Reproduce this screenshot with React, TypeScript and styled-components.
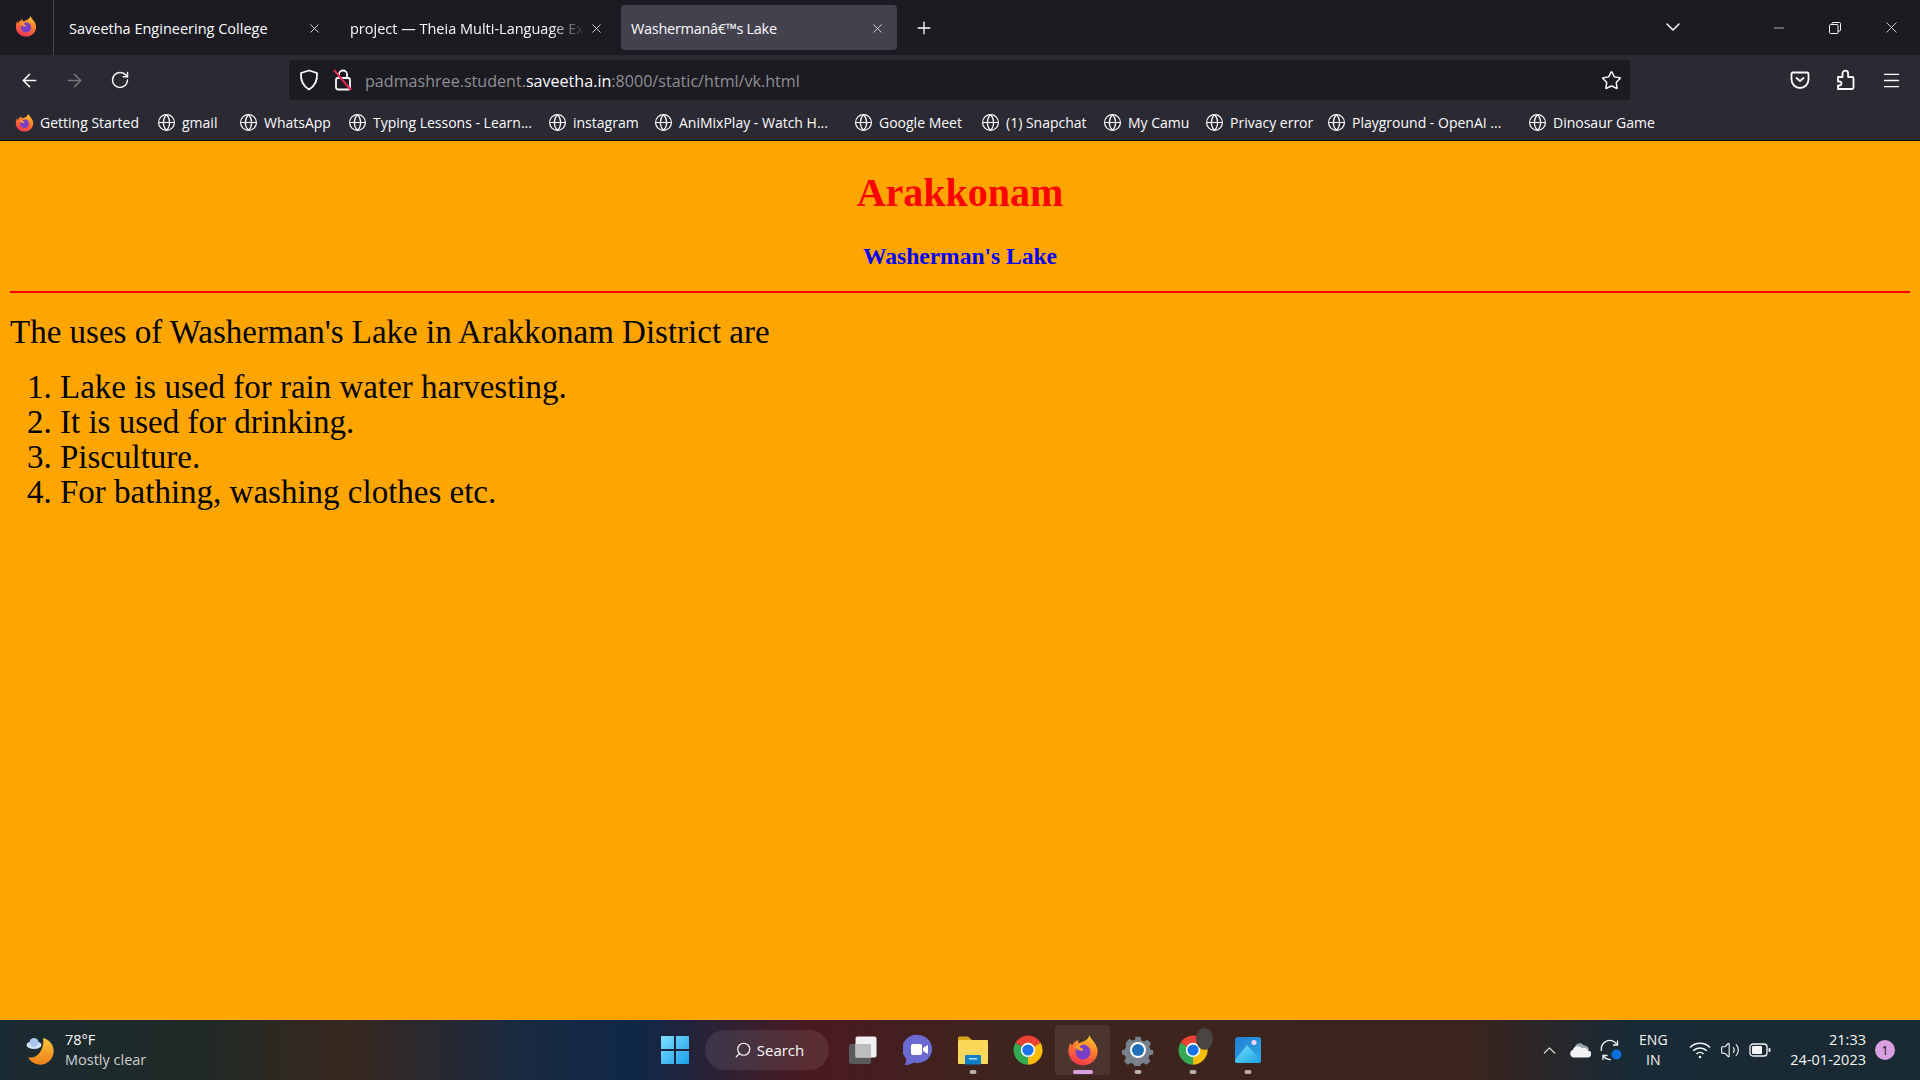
import { Globe, X, Plus, ChevronDown, ChevronUp, Minus, ArrowLeft, ArrowRight, RotateCw, Star, Menu, Search, Volume2 } from "lucide-react";
import styled, { createGlobalStyle } from "styled-components";

const GlobalStyle = createGlobalStyle`
    html, body { margin: 0; padding: 0; height: 100%; overflow: hidden; }
    #root { height: 100%; }
    * { box-sizing: border-box; }
`;

const UI_FONT = `"Open Sans", "Noto Sans", sans-serif`;

const bookmarks = [
    { label: "gmail", w: 82 },
    { label: "WhatsApp", w: 109 },
    { label: "Typing Lessons - Learn...", w: 200 },
    { label: "instagram", w: 106 },
    { label: "AniMixPlay - Watch H...", w: 200 },
    { label: "Google Meet", w: 127 },
    { label: "(1) Snapchat", w: 122 },
    { label: "My Camu", w: 102 },
    { label: "Privacy error", w: 122 },
    { label: "Playground - OpenAI ...", w: 201 },
    { label: "Dinosaur Game", w: 140 },
];

const items = [
    "Lake is used for rain water harvesting.",
    "It is used for drinking.",
    "Pisculture.",
    "For bathing, washing clothes etc.",
];

/** firefox logo */
const FirefoxLogo = ({ size = 22 }: { size?: number }) => (
    <svg width={size} height={size} viewBox="0 0 24 24">
        <defs>
            <linearGradient id="ffBody" x1="0.7" y1="0" x2="0.3" y2="1">
                <stop offset="0" stopColor="#ffc72c" />
                <stop offset="0.45" stopColor="#ff7a2e" />
                <stop offset="1" stopColor="#f0334f" />
            </linearGradient>
        </defs>
        <path d="M17 1c.6 2.600 2.300 3.500 3.600 5.600C22.200 9 23 11 23 13c0 6-5 10.500-11 10.500S1 19 1 13c0-2.400.6-4.500 1.600-6.400.2 1 .7 1.700 1.300 2.200C4.600 6.500 6.500 5 8.700 4.700c-.5 1-.6 1.700-.4 2.300 2.500-.8 6.900-1.500 8.700-6z" fill="url(#ffBody)" />
        <circle cx="12" cy="13.500" r="5.600" fill="#7a3fc8" />
        <path d="M6 10c2-3 6-4 9-2.500-3-.3-5 1-5.500 2.500 2 .8 3 1 2.500 2.500-2 .5-4.500-.5-6-2.500z" fill="#ff9a2e" />
    </svg>
);

const ChromeLogo = ({ size = 26 }: { size?: number }) => (
    <svg width={size} height={size} viewBox="0 0 24 24">
        <path d="M12 12 L2.600 6.500 A11 11 0 0 1 21.500 6.500 Z" fill="#ea4335" />
        <path d="M12 12 L21.500 6.500 A11 11 0 0 1 12 23 Z" fill="#fbbc04" />
        <path d="M12 12 L12 23 A11 11 0 0 1 2.600 6.500 Z" fill="#34a853" />
        <circle cx="12" cy="12" r="5.400" fill="#fff" />
        <circle cx="12" cy="12" r="4.200" fill="#1a73e8" />
    </svg>
);

const ShieldIcon = () => (
    <svg width="20" height="22" viewBox="0 0 20 22" fill="none" stroke="#fbfbfe" strokeWidth="1.800">
        <path d="M10 1.500 L18 4 C18.500 11 16 17 10 20.500 C4 17 1.500 11 2 4 Z" strokeLinejoin="round" />
    </svg>
);

const InsecureLockIcon = () => (
    <svg width="20" height="24" viewBox="0 0 20 24" fill="none">
        <path d="M6 10V6.500a4 4 0 0 1 8 0V10" stroke="#fbfbfe" strokeWidth="1.800" />
        <rect x="3" y="10" width="14" height="11.500" rx="2" stroke="#fbfbfe" strokeWidth="1.800" />
        <path d="M1 2 L18 22" stroke="#e22850" strokeWidth="2" />
    </svg>
);

const PocketIcon = () => (
    <svg width="20" height="20" viewBox="0 0 20 20" fill="none" stroke="#fbfbfe" strokeWidth="1.800" strokeLinecap="round" strokeLinejoin="round">
        <path d="M3 2.500h14a1.500 1.500 0 0 1 1.500 1.500v5.500a8.500 8.500 0 0 1-17 0V4A1.500 1.500 0 0 1 3 2.500z" />
        <path d="M6.500 8L10 11l3.500-3" />
    </svg>
);

const ExtensionIcon = () => (
    <svg width="21" height="22" viewBox="0 0 21 22" fill="none" stroke="#fbfbfe" strokeWidth="1.800" strokeLinejoin="round">
        <path d="M3 8h4.500V4.500a2.800 2.800 0 0 1 5.600 0V8H17a1.500 1.500 0 0 1 1.500 1.500v9A1.500 1.500 0 0 1 17 20H3v-3.500h1.500a2 2 0 0 0 0-4H3z" />
    </svg>
);

const RestoreIcon = () => (
    <svg width="12" height="12" viewBox="0 0 12 12" fill="none" stroke="#f4f4f4" strokeWidth="1">
        <rect x="0.500" y="2.500" width="8.500" height="9" rx="1" />
        <path d="M3 2.500V1.500a1 1 0 0 1 1-1h6.500a1 1 0 0 1 1 1V8a1 1 0 0 1-1 1H9" />
    </svg>
);

const WeatherIcon = () => (
    <svg width="30" height="30" viewBox="0 0 30 30">
        <defs>
            <linearGradient id="moon" x1="0" y1="0" x2="0" y2="1">
                <stop offset="0" stopColor="#f8c43a" />
                <stop offset="1" stopColor="#ee8018" />
            </linearGradient>
        </defs>
        <path d="M18 3 A13.500 13.500 0 1 1 3 22 C12 25 20 14 18 3 Z" fill="url(#moon)" />
        <ellipse cx="9" cy="10" rx="7.500" ry="4" fill="#d3e4f7" />
        <circle cx="9" cy="7.500" r="4.500" fill="#a9c8ee" />
    </svg>
);

const WindowsLogo = () => (
    <svg width="30" height="30" viewBox="0 0 30 30">
        <defs>
            <linearGradient id="win" x1="0" y1="0" x2="1" y2="1">
                <stop offset="0" stopColor="#7fe0ff" />
                <stop offset="1" stopColor="#1a9fe8" />
            </linearGradient>
        </defs>
        <path d="M1 2a1 1 0 0 1 1-1h12v13H1zM16 1h12a1 1 0 0 1 1 1v12H16zM1 16h13v13H2a1 1 0 0 1-1-1zM16 16h13v12a1 1 0 0 1-1 1H16z" fill="url(#win)" />
    </svg>
);

const TaskViewIcon = () => (
    <svg width="30" height="30" viewBox="0 0 30 30">
        <rect x="1" y="9" width="22" height="20" rx="2" fill="#5b5b5b" />
        <rect x="7.500" y="1.500" width="21" height="21" rx="2" fill="#f0f0f0" />
        <rect x="7.500" y="9" width="15.500" height="13.500" fill="#bdbdbd" />
    </svg>
);

const TeamsIcon = () => (
    <svg width="30" height="32" viewBox="0 0 30 32">
        <path d="M15 1a14 14 0 1 1-4 27.400C8 30.500 5 31 1.500 31c1.500-2 2-4 1.500-6.500A14 14 0 0 1 15 1z" fill="#6a6ad0" />
        <rect x="8" y="10" width="11" height="11" rx="2" fill="#fff" />
        <path d="M20 14l5-3v9l-5-3z" fill="#fff" />
    </svg>
);

const FolderIcon = () => (
    <svg width="32" height="30" viewBox="0 0 32 30">
        <path d="M1 3a1.500 1.500 0 0 1 1.500-1.500H11L15 5H1z" fill="#d9a21b" />
        <rect x="1" y="5" width="30" height="24" rx="1" fill="#fbd75a" />
        <rect x="8" y="20" width="16" height="9.500" rx="1" fill="#0f7fc8" />
        <rect x="12" y="23" width="8" height="1.500" fill="#bfe4fa" />
    </svg>
);

const SettingsIcon = () => (
    <svg width="32" height="32" viewBox="0 0 32 32">
        <path d="M13 1.500h6l1 4 3 1.300 3.600-2.100 4 4.300-2.100 3.500 1.300 3-.1 0 3.300 1v4.500l-4 1-1.300 3 2.100 3.500-4 4-3.600-2-3 1.300-1 4h-6l-1-4-3-1.300-3.600 2-4-4 2.100-3.500-1.300-3-4-1v-4.500l4-1 1.300-3L2.500 8l4-4.300 3.600 2.100 3-1.300z" fill="#77808b" transform="translate(1.500 1.500) scale(0.9)" />
        <circle cx="16" cy="16" r="8" fill="#fff" />
        <circle cx="16" cy="16" r="6" fill="#1c6fb8" />
    </svg>
);

const PhotosIcon = () => (
    <svg width="30" height="30" viewBox="0 0 30 30">
        <defs>
            <linearGradient id="photoBg" x1="0" y1="0" x2="1" y2="1">
                <stop offset="0" stopColor="#1f7fd0" />
                <stop offset="1" stopColor="#2fa8e8" />
            </linearGradient>
            <linearGradient id="photoHill" x1="0" y1="0" x2="1" y2="1">
                <stop offset="0" stopColor="#6fe0f8" />
                <stop offset="1" stopColor="#1ba0e8" />
            </linearGradient>
        </defs>
        <rect x="2" y="2" width="26" height="26" rx="3" fill="url(#photoBg)" />
        <circle cx="21" cy="7.500" r="2.500" fill="#f4d4ea" />
        <path d="M2 25 L14 10 L28 25 L28 26 A2 2 0 0 1 26 28 L4 28 A2 2 0 0 1 2 26 Z" fill="url(#photoHill)" />
    </svg>
);

const CloudIcon = () => (
    <svg width="22" height="16" viewBox="0 0 22 16">
        <path d="M6 5a5 5 0 0 1 9-1.500A4.500 4.500 0 0 1 20 8H4z" fill="#9aa4ab" />
        <path d="M5 15.500a4 4 0 0 1-1-7.800A5 5 0 0 1 13 6.500a4 4 0 0 1 6 2 3.500 3.500 0 0 1-.5 7z" fill="#f2f2f2" />
    </svg>
);

const SyncIcon = () => (
    <svg width="22" height="22" viewBox="0 0 22 22" fill="none" stroke="#f2f2f2" strokeWidth="1.300">
        <path d="M1.500 12A8.500 8.500 0 0 1 17 5.500" />
        <path d="M17.500 1.500v4.500H13" />
        <path d="M11 20.500a8.500 8.500 0 0 1-7.500-3.500" />
        <path d="M3 21v-4.500h4.500" />
        <circle cx="16.500" cy="15.500" r="5" fill="#0a6fd8" stroke="none" />
    </svg>
);

const WifiIcon = () => (
    <svg width="22" height="18" viewBox="0 0 22 18" fill="none" stroke="#f5f5f5" strokeWidth="1.500">
        <path d="M1 6.500a14 14 0 0 1 20 0" />
        <path d="M4.200 9.800a9.500 9.500 0 0 1 13.600 0" />
        <path d="M7.500 13a5 5 0 0 1 7 0" />
        <circle cx="11" cy="16" r="1.300" fill="#f5f5f5" stroke="none" />
    </svg>
);

const BatteryIcon = () => (
    <svg width="22" height="14" viewBox="0 0 22 14" fill="none">
        <rect x="1" y="1" width="17" height="12" rx="3" stroke="#f5f5f5" strokeWidth="1.300" />
        <rect x="3" y="3" width="10" height="8" rx="1" fill="#f5f5f5" />
        <rect x="19.500" y="5" width="2" height="4" rx="1" fill="#f5f5f5" />
    </svg>
);

const App = () => {
    return (
        <Screen>
            <GlobalStyle />
            <TabBar>
                <AppMenu><FirefoxLogo /></AppMenu>
                <Tab $width={281}>
                    <TabTitle>Saveetha Engineering College</TabTitle>
                    <X size={15} strokeWidth={1.4} color="#e8e8ea" />
                </Tab>
                <Tab $width={282}>
                    <TabTitle $fade>project — Theia Multi-Language Exam</TabTitle>
                    <X size={15} strokeWidth={1.4} color="#e8e8ea" />
                </Tab>
                <Tab $width={276} $active>
                    <TabTitle>Washermanâ€™s Lake</TabTitle>
                    <X size={15} strokeWidth={1.4} color="#e8e8ea" />
                </Tab>
                <NewTab><Plus size={20} strokeWidth={1.6} color="#fbfbfe" /></NewTab>
                <TabSpacer />
                <TabList><ChevronDown size={24} strokeWidth={1.5} color="#fbfbfe" /></TabList>
                <WindowButton><Minus size={16} strokeWidth={1} color="#f4f4f4" /></WindowButton>
                <WindowButton><RestoreIcon /></WindowButton>
                <WindowButton><X size={19} strokeWidth={1} color="#f4f4f4" /></WindowButton>
            </TabBar>

            <NavBar>
                <NavButton><ArrowLeft size={21} strokeWidth={1.7} color="#fbfbfe" /></NavButton>
                <NavButton><ArrowRight size={21} strokeWidth={1.7} color="#77767c" /></NavButton>
                <NavButton><RotateCw size={20} strokeWidth={1.8} color="#fbfbfe" /></NavButton>
                <UrlBar>
                    <UrlIcons>
                        <ShieldIcon />
                        <InsecureLockIcon />
                    </UrlIcons>
                    <UrlText>padmashree.student.<b>saveetha.in</b>:8000/static/html/vk.html</UrlText>
                    <Star size={21} strokeWidth={1.7} color="#fbfbfe" />
                </UrlBar>
                <NavActions>
                    <PocketIcon />
                    <ExtensionIcon />
                    <Menu size={21} strokeWidth={1.6} color="#fbfbfe" />
                </NavActions>
            </NavBar>

            <BookmarkBar>
                <Bookmark $width={142}>
                    <FirefoxLogo size={19} />
                    <span>Getting Started</span>
                </Bookmark>
                {bookmarks.map((b) => (
                    <Bookmark key={b.label} $width={b.w}>
                        <Globe size={19} strokeWidth={1.5} color="#fbfbfe" />
                        <span>{b.label}</span>
                    </Bookmark>
                ))}
            </BookmarkBar>

            <Page>
                <Title>Arakkonam</Title>
                <SubTitle>Washerman's Lake</SubTitle>
                <Rule />
                <Intro>The uses of Washerman's Lake in Arakkonam District are</Intro>
                <UseList>
                    {items.map((t) => <li key={t}>{t}</li>)}
                </UseList>
            </Page>

            <TaskBar>
                <Weather>
                    <WeatherIcon />
                    <WeatherText>
                        <span>78°F</span>
                        <small>Mostly clear</small>
                    </WeatherText>
                </Weather>
                <Center>
                    <TaskIcon><WindowsLogo /></TaskIcon>
                    <SearchPill><Search size={18} strokeWidth={1.6} color="#f5f5f5" style={{ transform: "scaleX(-1)" }} />Search</SearchPill>
                    <TaskIcon><TaskViewIcon /></TaskIcon>
                    <TaskIcon><TeamsIcon /></TaskIcon>
                    <TaskIcon $dot="#b8b0aa"><FolderIcon /></TaskIcon>
                    <TaskIcon><ChromeLogo size={32} /></TaskIcon>
                    <TaskIcon $active $dot="#d8a0e0"><FirefoxLogo size={32} /></TaskIcon>
                    <TaskIcon $dot="#b8b0aa"><SettingsIcon /></TaskIcon>
                    <TaskIcon $dot="#b8b0aa">
                        <ChromeLogo size={32} />
                        <Avatar />
                    </TaskIcon>
                    <TaskIcon $dot="#b8b0aa"><PhotosIcon /></TaskIcon>
                </Center>
                <Tray>
                    <ChevronUp size={21} strokeWidth={1.2} color="#f5f5f5" />
                    <CloudIcon />
                    <SyncIcon />
                    <Lang>ENG<br />IN</Lang>
                    <WifiIcon />
                    <Volume2 size={20} strokeWidth={1.3} color="#f5f5f5" />
                    <BatteryIcon />
                    <Clock>21:33<br />24-01-2023</Clock>
                    <Badge>1</Badge>
                </Tray>
            </TaskBar>
        </Screen>
    );
};

export default App;

const Screen = styled.div`
    display: flex;
    flex-direction: column;
    width: 1920px;
    height: 1080px;
    overflow: hidden;
    font-family: ${UI_FONT};
    color: #fbfbfe;
`;

const TabBar = styled.div`
    display: flex;
    align-items: center;
    flex: none;
    height: 55px;
    padding-right: 1px;
    background-color: #1c1b22;
`;

const AppMenu = styled.div`
    display: flex;
    align-items: center;
    justify-content: center;
    flex: none;
    width: 54px;
    height: 100%;
    padding: 0 2px 4px 0;
    border-right: 1px solid #4a4950;
`;

const Tab = styled.div<{ $width: number; $active?: boolean }>`
    display: flex;
    align-items: center;
    justify-content: space-between;
    flex: none;
    width: ${({ $width }) => $width}px;
    height: 45px;
    margin-left: ${({ $active }) => ($active ? 4 : 0)}px;
    padding: 1px ${({ $active }) => ($active ? 12 : 13)}px 0 ${({ $active }) => ($active ? 10 : 15)}px;
    border-radius: 4px;
    background-color: ${({ $active }) => ($active ? "#42414d" : "transparent")};
    font-size: 14.500px;
    letter-spacing: ${({ $active }) => ($active ? "-0.3px" : "0")};
`;

const TabTitle = styled.span<{ $fade?: boolean }>`
    display: block;
    overflow: hidden;
    white-space: nowrap;
    width: 235px;
    ${({ $fade }) => ($fade ? "mask-image: linear-gradient(to right, #000 85%, transparent 100%);" : "")}
`;

const NewTab = styled.div`
    display: flex;
    justify-content: center;
    flex: none;
    width: 54px;
`;

const TabSpacer = styled.div`
    flex: 1;
`;

const TabList = styled.div`
    display: flex;
    justify-content: center;
    flex: none;
    width: 40px;
    margin-right: 58px;
    padding-bottom: 2px;
`;

const WindowButton = styled.div`
    display: flex;
    justify-content: center;
    flex: none;
    width: 56px;
`;

const NavBar = styled.div`
    display: flex;
    align-items: center;
    flex: none;
    height: 45px;
    padding: 5px 0 0 7px;
    background-color: #2b2a33;
`;

const NavButton = styled.div`
    display: flex;
    justify-content: center;
    flex: none;
    width: 45px;
`;

const UrlBar = styled.div`
    display: flex;
    align-items: center;
    flex: none;
    width: 1341px;
    height: 40px;
    margin-left: 147px;
    padding: 0 8px 0 10px;
    border-radius: 4px;
    background-color: #1c1b22;
`;

const UrlIcons = styled.div`
    display: flex;
    align-items: center;
    gap: 14px;
    flex: none;
`;

const UrlText = styled.div`
    flex: 1;
    margin-left: 12px;
    padding-top: 2px;
    color: #8f8f94;
    font-size: 16.100px;
    white-space: nowrap;

    & > b {
        color: #fbfbfe;
        font-weight: 400;
    }
`;

const NavActions = styled.div`
    display: flex;
    align-items: center;
    justify-content: space-between;
    width: 112px;
    margin-left: 160px;
`;

const BookmarkBar = styled.div`
    display: flex;
    align-items: center;
    flex: none;
    height: 41px;
    padding: 5px 0 0 15px;
    background-color: #2b2a33;
    border-bottom: 1px solid #0c0c0d;
`;

const Bookmark = styled.div<{ $width: number }>`
    display: flex;
    align-items: center;
    gap: 6px;
    flex: none;
    width: ${({ $width }) => $width}px;
    font-size: 14px;
    white-space: nowrap;
`;

const Page = styled.div`
    flex: 1;
    padding: 8px 10px;
    background-color: #ffa500;
    color: #000;
    font-family: "Liberation Serif", serif;
`;

const Title = styled.h1`
    margin: 22px 0 0;
    color: #f00;
    font-size: 40px;
    font-weight: 700;
    line-height: 44px;
    text-align: center;
`;

const SubTitle = styled.h3`
    margin: 28px 0 0;
    color: #00f;
    font-size: 23.500px;
    font-weight: 700;
    line-height: 26px;
    text-align: center;
`;

const Rule = styled.hr`
    height: 2px;
    margin: 22px 0 0;
    border: 0;
    background-color: #f00;
`;

const Intro = styled.p`
    margin: 21px 0 0;
    font-size: 33px;
    line-height: 36px;
`;

const UseList = styled.ol`
    margin: 20px 0 0;
    padding: 0 0 0 50px;
    font-size: 33px;
    line-height: 35px;
`;

const TaskBar = styled.div`
    display: grid;
    grid-template-columns: 1fr auto 1fr;
    align-items: center;
    flex: none;
    height: 60px;
    background: linear-gradient(to right, #1a2a32 0%, #1f2a26 10%, #38281f 18%, #1a2a40 27%, #0f2848 33%, #4a1a20 42%, #3e241e 52%, #3c241c 76%, #182a36 85%, #1a2a32 100%);
`;

const Weather = styled.div`
    display: flex;
    align-items: center;
    gap: 10px;
    padding-left: 25px;
`;

const WeatherText = styled.div`
    display: flex;
    flex-direction: column;
    font-size: 14.500px;
    line-height: 20px;

    & > small {
        color: #cfcfcf;
        font-size: 14.500px;
    }
`;

const Center = styled.div`
    display: flex;
    align-items: center;
    justify-content: center;
    padding-left: 2px;
`;

const TaskIcon = styled.div<{ $active?: boolean; $dot?: string }>`
    display: flex;
    position: relative;
    align-items: center;
    justify-content: center;
    flex: none;
    width: 55px;
    height: 50px;
    border-radius: 4px;
    background-color: ${({ $active }) => ($active ? "rgba(255,255,255,0.08)" : "transparent")};

    &::after {
        content: "";
        display: ${({ $dot }) => ($dot ? "block" : "none")};
        position: absolute;
        left: 50%;
        bottom: 1px;
        width: ${({ $active }) => ($active ? 20 : 7)}px;
        height: 4px;
        border-radius: 2px;
        background-color: ${({ $dot }) => $dot};
        transform: translateX(-50%);
    }
`;

const Avatar = styled.div`
    position: absolute;
    top: 3px;
    right: 7px;
    width: 17px;
    height: 22px;
    border-radius: 50%;
    background-color: #4a4540;
`;

const SearchPill = styled.div`
    display: flex;
    align-items: center;
    justify-content: center;
    gap: 5px;
    flex: none;
    width: 124px;
    height: 40px;
    margin: 0 6px 0 3px;
    padding-left: 4px;
    border-radius: 20px;
    background-color: rgba(255, 255, 255, 0.09);
    font-size: 15px;
`;

const Tray = styled.div`
    display: flex;
    align-items: center;
    justify-content: flex-end;
    gap: 9px;
    padding-right: 25px;
    color: #f5f5f5;
`;

const Lang = styled.div`
    width: 42px;
    margin: 0 6px 0 1px;
    font-size: 14px;
    line-height: 20px;
    text-align: center;
`;

const Clock = styled.div`
    margin-left: 10px;
    font-size: 14.500px;
    line-height: 20px;
    text-align: right;
`;

const Badge = styled.div`
    display: flex;
    align-items: center;
    justify-content: center;
    width: 20px;
    height: 20px;
    border-radius: 50%;
    background-color: #d8a0e0;
    color: #1c1b22;
    font-size: 13px;
`;
